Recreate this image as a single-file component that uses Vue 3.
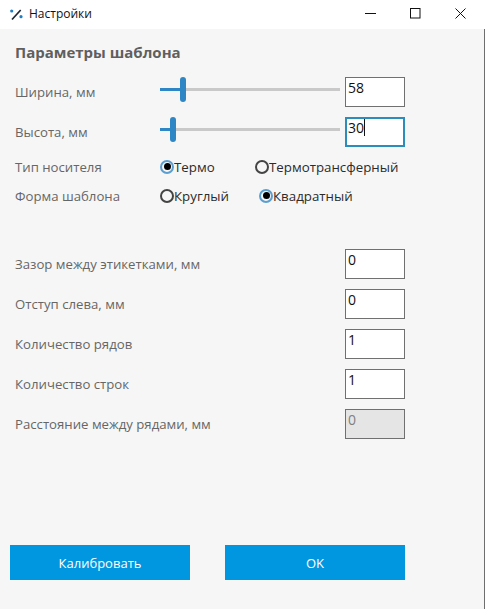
<template>
  <div class="window">
    <div class="titlebar">
      <svg class="app-icon" width="14" height="14" viewBox="0 0 14 14">
        <path d="M3 12.5 L11.7 3" stroke="#1c2733" stroke-width="1.7" fill="none" />
        <circle cx="2.7" cy="4" r="1.6" fill="#1f7fc4" />
        <circle cx="12" cy="9.7" r="1.6" fill="#1f7fc4" />
      </svg>
      <span class="title">Настройки</span>
      <div class="controls">
        <svg width="11" height="11" viewBox="0 0 11 11"><path d="M0 5.5H11" stroke="#111" fill="none" /></svg>
        <svg width="11" height="11" viewBox="0 0 11 11"><rect x="0.5" y="0.5" width="9.5" height="9.5" stroke="#111" fill="none" /></svg>
        <svg width="11" height="11" viewBox="0 0 11 11"><path d="M0.5 0.5L10.5 10.5M10.5 0.5L0.5 10.5" stroke="#111" fill="none" /></svg>
      </div>
    </div>

    <div class="content">
      <h1 class="heading">Параметры шаблона</h1>

      <div class="slider-rows">
        <div v-for="row in sliders" :key="row.label" class="row">
          <span class="label">{{ row.label }}</span>
          <div class="slider">
            <div class="track"></div>
            <div class="track-fill" :style="{ width: row.pos + 'px' }"></div>
            <div class="thumb" :style="{ left: row.pos - 3 + 'px' }"></div>
          </div>
          <div class="field" :class="{ focused: row.focused }">
            {{ row.value }}<span v-if="row.focused" class="caret"></span>
          </div>
        </div>
      </div>

      <div class="radio-rows">
        <div v-for="group in radios" :key="group.label" class="radio-row">
          <span class="label">{{ group.label }}</span>
          <label
            v-for="opt in group.options"
            :key="opt.text"
            class="radio"
            :class="{ checked: opt.checked }"
            :style="{ width: opt.width + 'px' }"
          >
            <span class="dot"></span>{{ opt.text }}
          </label>
        </div>
      </div>

      <div class="fields">
        <div v-for="row in fields" :key="row.label" class="field-row">
          <span class="label">{{ row.label }}</span>
          <div class="field" :class="{ disabled: row.disabled }">{{ row.value }}</div>
        </div>
      </div>

      <div class="buttons">
        <button class="btn">Калибровать</button>
        <button class="btn">OK</button>
      </div>
    </div>
  </div>
</template>

<script setup>
const sliders = [
  { label: 'Ширина, мм', value: '58', pos: 23 },
  { label: 'Высота, мм', value: '30', pos: 13, focused: true },
]

const radios = [
  {
    label: 'Тип носителя',
    options: [
      { text: 'Термо', checked: true, width: 95 },
      { text: 'Термотрансферный' },
    ],
  },
  {
    label: 'Форма шаблона',
    options: [
      { text: 'Круглый', width: 99 },
      { text: 'Квадратный', checked: true },
    ],
  },
]

const fields = [
  { label: 'Зазор между этикетками, мм', value: '0' },
  { label: 'Отступ слева, мм', value: '0' },
  { label: 'Количество рядов', value: '1' },
  { label: 'Количество строк', value: '1' },
  { label: 'Расстояние между рядами, мм', value: '0', disabled: true },
]
</script>

<style scoped>
.window {
  width: 485px;
  height: 609px;
  display: flex;
  flex-direction: column;
  font-family: "Open Sans", "Noto Sans", sans-serif;
  font-size: 13.2px;
  color: #666;
}

.titlebar {
  height: 29px;
  flex-shrink: 0;
  display: flex;
  align-items: center;
  background: #fff;
  padding-left: 9px;
}

.app-icon {
  margin-right: 6px;
  margin-top: -2px;
}

.title {
  font-size: 12px;
  color: #111;
  margin-top: -2px;
}

.controls {
  margin-left: auto;
  margin-right: 19px;
  margin-top: -3px;
  display: flex;
  gap: 34px;
}

.content {
  flex: 1;
  display: flex;
  flex-direction: column;
  background: #f6f6f6;
  border-right: 1px solid #6e6e6e;
  padding: 14px 0 29px 0;
  box-sizing: border-box;
}

.heading {
  margin: 0 0 15px 15px;
  height: 19px;
  line-height: 19px;
  font-size: 15px;
  font-weight: 700;
  color: #5f5f5f;
}

.slider-rows {
  display: flex;
  flex-direction: column;
  gap: 10px;
}

.row,
.field-row {
  display: flex;
  align-items: center;
  height: 30px;
  padding-left: 15px;
}

.label {
  width: 145px;
  flex-shrink: 0;
}

.field-row .label {
  width: 330px;
}

.slider {
  position: relative;
  width: 180px;
  height: 25px;
  margin-right: 5px;
  align-self: flex-start;
}

.track,
.track-fill {
  position: absolute;
  left: 0;
  top: 11px;
  height: 3px;
}

.track {
  width: 100%;
  background: #c9c9c9;
}

.track-fill {
  background: #2f86c5;
}

.thumb {
  position: absolute;
  top: 0;
  width: 6px;
  height: 25px;
  border-radius: 3px;
  background: #2f86c5;
}

.field {
  position: relative;
  width: 60px;
  height: 30px;
  box-sizing: border-box;
  border: 1px solid #707070;
  background: #fff;
  padding: 0 2px;
  line-height: 20px;
  color: #111;
  font-size: 14px;
}

.field.focused {
  border: 2px solid #2a8dbb;
  padding: 0 1px;
  line-height: 18px;
}

.field.disabled {
  background: #e5e5e5;
  color: #808080;
}

.caret {
  display: inline-block;
  width: 1px;
  height: 17px;
  background: #111;
  vertical-align: -3px;
}

.radio-rows {
  margin-top: 5px;
}

.radio-row {
  display: flex;
  align-items: center;
  height: 29px;
  padding-left: 15px;
}

.radio {
  display: flex;
  align-items: center;
  flex-shrink: 0;
  color: #2b2b2b;
  white-space: nowrap;
  font-size: 13.3px;
}

.dot {
  width: 14px;
  height: 14px;
  box-sizing: border-box;
  border: 2px solid #444;
  border-radius: 50%;
  flex-shrink: 0;
  display: flex;
  align-items: center;
  justify-content: center;
}

.checked .dot {
  border-color: #5a9fd0;
}

.checked .dot::after {
  content: "";
  width: 7px;
  height: 7px;
  border-radius: 50%;
  background: #000;
}

.fields {
  margin-top: 39px;
  display: flex;
  flex-direction: column;
  gap: 10px;
}

.buttons {
  margin-top: auto;
  padding-left: 10px;
  display: flex;
  gap: 35px;
}

.btn {
  width: 180px;
  height: 35px;
  border: none;
  background: #0097e0;
  color: #fff;
  font-family: inherit;
  font-size: 13px;
}
</style>

<style>
html, body {
  background: #fff;
}
</style>
